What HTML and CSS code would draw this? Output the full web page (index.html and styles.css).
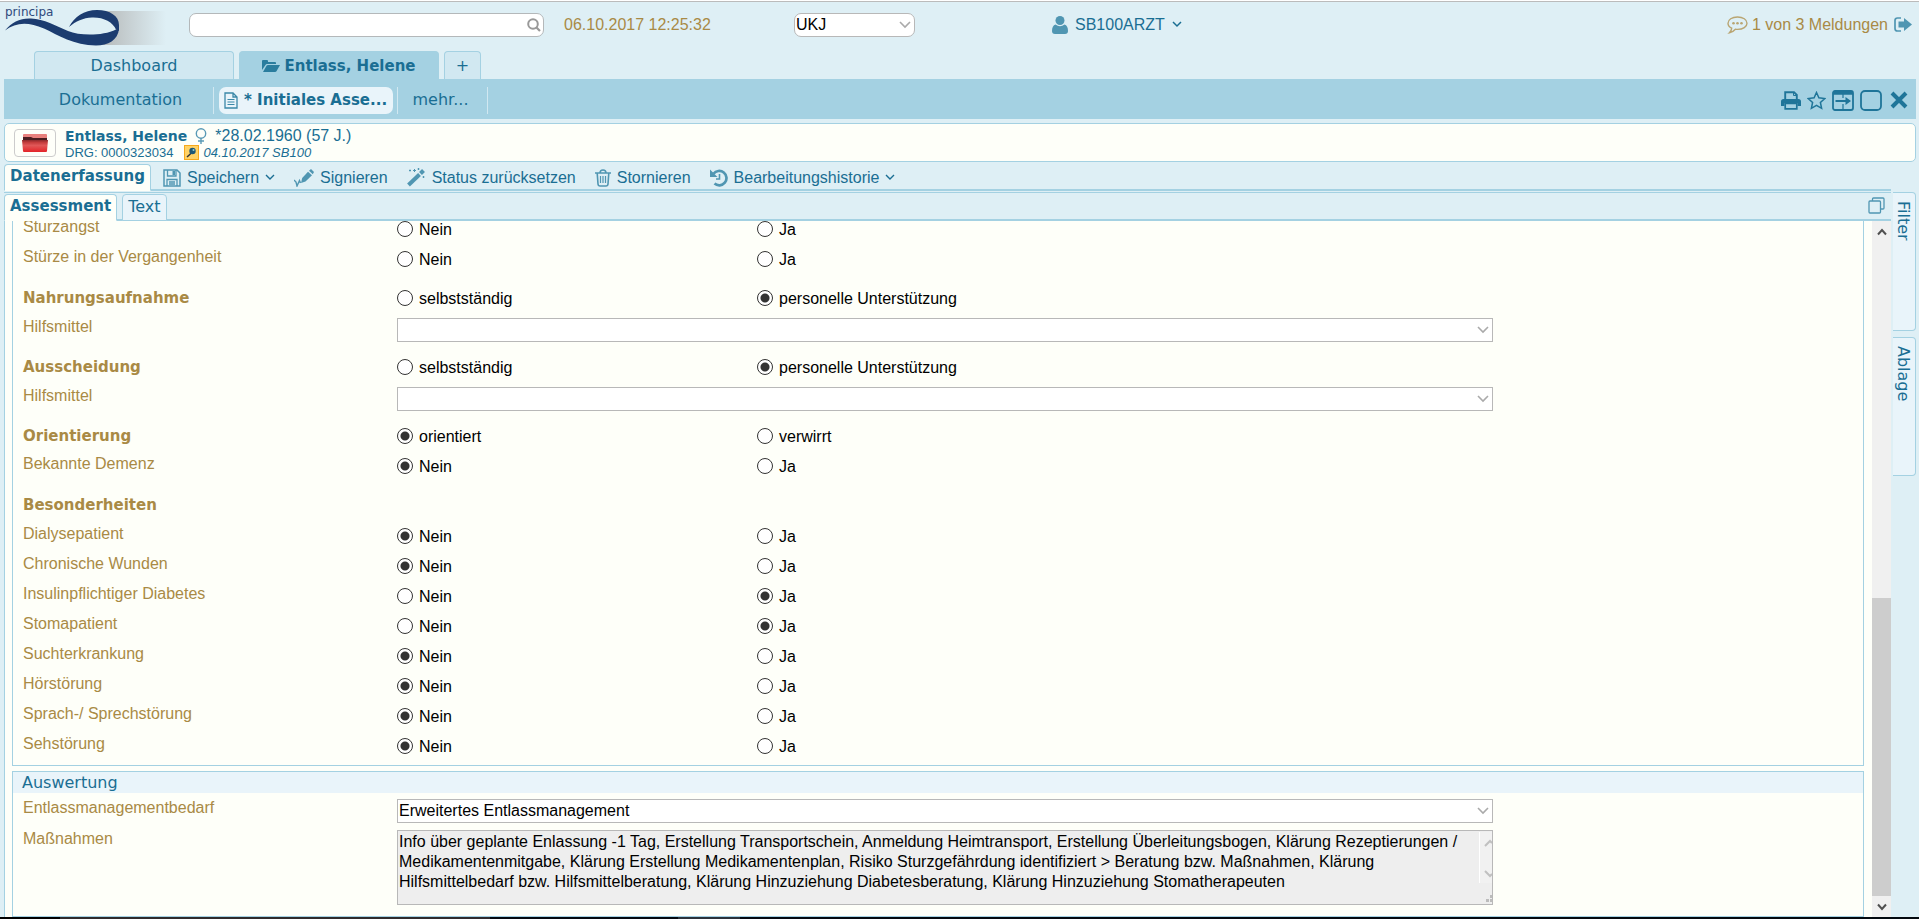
FILE: index.html
```
<!DOCTYPE html>
<html lang="de">
<head>
<meta charset="utf-8">
<title>Entlass, Helene – Initiales Assessment</title>
<link rel="stylesheet" href="styles.css">
</head>
<body>
<div class="app">
  <header class="topbar">
    <svg class="logo" width="166" height="46" viewBox="0 0 166 46" role="img" aria-label="principa">
      <defs><linearGradient id="fade" x1="0" x2="1"><stop offset="0" stop-color="#b5b8b8"/><stop offset="1" stop-color="#b5b8b8" stop-opacity="0"/></linearGradient></defs>
      <rect x="100" y="9" width="66" height="34" fill="url(#fade)"/>
      <ellipse cx="98" cy="26" rx="18" ry="15" fill="#deeff5"/>
      <path d="M5 28.500C12 20 20 16 31 16.500C44 17 56 24 68 29C80 34 103 34 116 27.500L119 27C118 38 108 43.500 96 43.500C74 43.500 58 33 44 26.500C28 19.500 16 20 5 28.500Z" fill="#1c3c70"/>
      <path d="M69 25C74 15 84 8 97 8C110 8 119 14 119 23V29L116 27.500C113 20 103 15 92 15.500C83 16 76 19 69 25Z" fill="#1c3c70"/>
      <text x="5" y="14" class="logo-text">principa</text>
    </svg>
    <div class="search">
      <input type="text" aria-label="Suche">
      <svg width="14" height="14" viewBox="0 0 14 14"><circle cx="6" cy="6" r="4.8" fill="none" stroke="#999" stroke-width="2"/><path d="M9.5 9.5L13 13" stroke="#999" stroke-width="2.2"/></svg>
    </div>
    <span class="clock">06.10.2017 12:25:32</span>
    <span class="select-wrap clinic">
      <select aria-label="Klinik"><option>UKJ</option></select>
      <svg width="12" height="8" viewBox="0 0 12 8"><path d="M1 1l5 5 5-5" fill="none" stroke="#aaa" stroke-width="1.600"/></svg>
    </span>
    <button class="plain user">
      <svg width="16" height="18" viewBox="0 0 16 18"><circle cx="8" cy="4.5" r="4.5" fill="#5096b2"/><path d="M3.500 8.500Q8 12 12.500 8.500Q16 9.500 16 15Q16 18 13 18H3Q0 18 0 15Q0 9.500 3.500 8.500Z" fill="#5096b2"/></svg>
      SB100ARZT
      <svg class="caret" width="10" height="7" viewBox="0 0 10 7"><path d="M1 1l4 4 4-4" fill="none" stroke="#1a6e93" stroke-width="1.500"/></svg>
    </button>
    <div class="messages">
      <svg width="21" height="18" viewBox="0 0 21 18"><path d="M10.500 1C16 1 20 3.700 20 7.200S16 13.400 10.500 13.400Q9.500 13.400 8.400 13.200Q6 16 2.500 16.700Q4.500 14.800 4.700 12.100Q1 10.300 1 7.200C1 3.700 5 1 10.500 1Z" fill="none" stroke="#b9a572" stroke-width="1.400"/><circle cx="6.500" cy="7.300" r="1.300" fill="#b9a572"/><circle cx="10.500" cy="7.300" r="1.300" fill="#b9a572"/><circle cx="14.500" cy="7.300" r="1.300" fill="#b9a572"/></svg>
      <span>1 von 3 Meldungen</span>
      <button class="plain" aria-label="Abmelden"><svg width="18" height="15" viewBox="0 0 18 15"><path d="M7 1H3.500Q1 1 1 3.500V11.500Q1 14 3.500 14H7" fill="none" stroke="#5096b2" stroke-width="1.700"/><path d="M4.500 4.500H10V1L18 7.500L10 14V10.500H4.500Z" fill="#5096b2"/></svg></button>
    </div>
  </header>

  <nav class="tabs">
    <button class="tab tab-wide">Dashboard</button>
    <button class="tab tab-wide tab-on">
      <svg width="18" height="14" viewBox="0 0 18 14"><path d="M0 11V2Q0 1 1 1H5Q6 1 6 2V3H13Q14 3 14 4V5H5Q4 5 3.300 6.200Z" fill="#2a7d9e"/><path d="M1 13L4.500 6.800Q5 6 6 6H18L14.500 12.200Q14 13 13 13Z" fill="#2a7d9e"/></svg>
      Entlass, Helene
    </button>
    <button class="tab tab-add">+</button>
  </nav>

  <div class="subbar">
    <button class="plain sub sub-doc">Dokumentation</button>
    <button class="plain sub-on">
      <svg width="14" height="17" viewBox="0 0 14 17"><path d="M1 1H9L13 5V16H1Z M9 1V5H13" fill="none" stroke="#3b88a8" stroke-width="1.300"/><path d="M3.500 7.500H10.500M3.500 10H10.500M3.500 12.500H10.500" stroke="#3b88a8" stroke-width="1.200"/></svg>
      * Initiales Asse...
    </button>
    <button class="plain sub sub-more">mehr...</button>
    <div class="tools">
      <button class="plain" aria-label="Drucken"><svg width="20" height="19" viewBox="0 0 20 19"><path d="M4.200 8V1.200H13L15.800 4V8" fill="none" stroke="#1f7599" stroke-width="1.900"/><path d="M12.500 1V4.500H16" fill="none" stroke="#1f7599"/><path d="M0 15V10.500Q0 8 2.500 8H17.500Q20 8 20 10.500V15H16.500V12H3.500V15Z" fill="#1f7599"/><path d="M4.200 12.500H15.800V17.800H4.200Z" fill="none" stroke="#1f7599" stroke-width="1.700"/></svg></button>
      <button class="plain" aria-label="Favorit"><svg width="19" height="19" viewBox="0 0 19 19"><path d="M9.500 1.500L11.900 6.800L17.800 7.500L13.400 11.500L14.600 17.300L9.500 14.400L4.400 17.300L5.600 11.500L1.200 7.500L7.100 6.800Z" fill="none" stroke="#1f7599" stroke-width="1.500"/></svg></button>
      <button class="plain" aria-label="Anordnen"><svg width="22" height="21" viewBox="0 0 22 21"><rect x="1" y="1" width="20" height="19" rx="2" fill="none" stroke="#1f7599" stroke-width="1.800"/><path d="M1 3H21" stroke="#1f7599" stroke-width="3.500"/><path d="M11 4V8M11 14V20" stroke="#1f7599" stroke-width="1.200"/><path d="M3.500 11H15" stroke="#1f7599" stroke-width="2"/><path d="M13.500 7L19 11L13.500 15Z" fill="#1f7599"/></svg></button>
      <button class="plain" aria-label="Maximieren"><svg width="22" height="21" viewBox="0 0 22 21"><rect x="1" y="1" width="20" height="19" rx="4" fill="none" stroke="#1f7599" stroke-width="1.800"/></svg></button>
      <button class="plain close" aria-label="Schließen"><svg width="18" height="18" viewBox="0 0 18 18"><path d="M2 2L16 16M16 2L2 16" stroke="#1f7599" stroke-width="4"/></svg></button>
    </div>
  </div>

  <section class="patient">
    <button class="folder" aria-label="Akte">
      <svg width="26" height="18" viewBox="0 0 26 18"><defs><linearGradient id="red" x1="0" x2="0" y1="0" y2="1"><stop offset="0" stop-color="#8a2a2c"/><stop offset=".2" stop-color="#c43c3c"/><stop offset=".45" stop-color="#e05858"/><stop offset="1" stop-color="#e32428"/></linearGradient></defs><path d="M1 1Q1 0 2 0H24Q25 0 25 1V6H1Z" fill="#e9817d"/><path d="M1 3H9L11 4H25V7H1Z" fill="#4a1d1f"/><path d="M0 6H26L25 17Q25 18 24 18H2Q1 18 1 17Z" fill="url(#red)"/></svg>
    </button>
    <div class="who">
      <div class="who-main"><strong>Entlass, Helene</strong>
        <svg width="12" height="16" viewBox="0 0 12 16"><circle cx="6" cy="5.500" r="4.700" fill="none" stroke="#5a9ab5" stroke-width="1.400"/><path d="M6 10V16M3 13H9" stroke="#5a9ab5" stroke-width="1.400"/></svg>
        <span class="born">*28.02.1960 (57 J.)</span></div>
      <div class="who-sub"><span>DRG: 0000323034</span>
        <svg width="15" height="15" viewBox="0 0 15 15"><rect x=".5" y=".5" width="14" height="14" fill="#ffd265" stroke="#f7a81b"/><path d="M3 12L8 7.500" stroke="#333" stroke-width="1.500"/><circle cx="8.500" cy="6" r="3.200" fill="#1d5776"/><circle cx="9.500" cy="5" r="1" fill="#9cc"/></svg>
        <em>04.10.2017 SB100</em></div>
    </div>
  </section>

  <div class="work">
    <main class="main">
      <div class="toolbar">
        <button class="tab-local tab-local-on tab-data">Datenerfassung</button>
        <div class="actions">
          <button class="plain"><svg width="18" height="18" viewBox="0 0 18 18"><path d="M1 1H14L17 4V17H1Z" fill="none" stroke="#5096b2" stroke-width="1.500"/><path d="M4.500 1V7H13V1M4 17V10.500H14V17M6 13H12M6 15H12" fill="none" stroke="#5096b2" stroke-width="1.300"/><path d="M9.500 2H12V6H9.500Z" fill="#5096b2"/></svg>Speichern<svg class="caret" width="10" height="7" viewBox="0 0 10 7"><path d="M1 1l4 4 4-4" fill="none" stroke="#1a6e93" stroke-width="1.400"/></svg></button>
          <button class="plain"><svg width="20" height="18" viewBox="0 0 20 18"><path d="M7 14L8.200 9L14 2.800L18 6.300L11.500 12.500Z" fill="#5096b2"/><path d="M15 1.800L17 0L20 3L18.800 5.200Z" fill="#5096b2"/><path d="M0 11L2 13L3 17L5.500 11.500L6.500 14" fill="none" stroke="#5096b2" stroke-width="1.400"/></svg>Signieren</button>
          <button class="plain"><svg width="19" height="19" viewBox="0 0 19 19"><path d="M1.500 17L12.500 6.500" stroke="#5096b2" stroke-width="4"/><path d="M13.500 5.500L16.500 2.500" stroke="#5096b2" stroke-width="4"/><path d="M3 1.500V3.500M2 2.500H4M7.500 1V4M6 2.500H9M11.500 0V2M10.500 1H12.500M16.500 8V10M15.500 9H17.500" stroke="#5096b2"/></svg>Status zurücksetzen</button>
          <button class="plain"><svg width="16" height="18" viewBox="0 0 16 18"><path d="M0 4H16M5 4Q5 1 8 1T11 4M2.200 4L3 15Q3.200 17 5 17H11Q12.800 17 13 15L13.800 4" fill="none" stroke="#5096b2" stroke-width="1.600"/><path d="M5.500 7V14M8 7V14M10.500 7V14" stroke="#5096b2" stroke-width="1.200"/></svg>Stornieren</button>
          <button class="plain"><svg width="18" height="18" viewBox="0 0 18 18"><path d="M3.500 4.800A7.200 7.200 0 1 1 4.500 14.500" fill="none" stroke="#5096b2" stroke-width="2.700"/><path d="M0 0.500V8H7.500Z" fill="#5096b2"/><path d="M9.500 5V10H6" fill="none" stroke="#5096b2" stroke-width="1.600"/></svg>Bearbeitungshistorie<svg class="caret" width="10" height="7" viewBox="0 0 10 7"><path d="M1 1l4 4 4-4" fill="none" stroke="#1a6e93" stroke-width="1.400"/></svg></button>
        </div>
      </div>
      <div class="viewbar">
        <button class="tab-local tab-local-on">Assessment</button>
        <button class="tab-local">Text</button>
        <button class="plain popout" aria-label="In neuem Fenster"><svg width="17" height="17" viewBox="0 0 17 17"><rect x="4.500" y="1" width="11.500" height="11" rx="1" fill="none" stroke="#5096b2" stroke-width="1.300"/><rect x="1" y="4" width="11.500" height="12" rx="1" fill="#deeff5" stroke="#5096b2" stroke-width="1.300"/></svg></button>
      </div>
      <div class="pane">
        <form class="form" id="form">
          <div class="box box-top" id="rows"></div>
          <div class="box">
            <h2>Auswertung</h2>
            <div class="result">
              <div class="row"><label for="bedarf">Entlassmanagementbedarf</label>
                <span class="select-wrap wide"><select id="bedarf"><option>Erweitertes Entlassmanagement</option></select><svg width="12" height="8" viewBox="0 0 12 8"><path d="M1 1l5 5 5-5" fill="none" stroke="#aaa" stroke-width="1.600"/></svg></span></div>
              <div class="row row-area"><label for="massnahmen">Maßnahmen</label>
                <span class="area wide"><textarea id="massnahmen" readonly>Info über geplante Enlassung -1 Tag, Erstellung Transportschein, Anmeldung Heimtransport, Erstellung Überleitungsbogen, Klärung Rezeptierungen / Medikamentenmitgabe, Klärung Erstellung Medikamentenplan, Risiko Sturzgefährdung identifiziert &gt; Beratung bzw. Maßnahmen, Klärung Hilfsmittelbedarf bzw. Hilfsmittelberatung, Klärung Hinzuziehung Diabetesberatung, Klärung Hinzuziehung Stomatherapeuten</textarea>
                <svg class="area-scroll" width="13" height="73" viewBox="0 0 13 73"><rect x="0" y="1" width="13" height="51" fill="#f1f1f1"/><path d="M.5 1V52" stroke="#fff"/><path d="M6 15l5-5 2 2M6 40l5 5 2-2" fill="none" stroke="#c0c0c0" stroke-width="2"/><path d="M7 68h3v3h-3zM11 68h2v3h-2zM11 64h2v3h-2z" fill="#bcbcbc"/></svg></span></div>
            </div>
          </div>
        </form>
        <div class="scroll">
          <button class="plain" aria-label="Nach oben"><svg width="10" height="8" viewBox="0 0 10 8"><path d="M1 6.500l4-4.500 4 4.500" fill="none" stroke="#505050" stroke-width="2"/></svg></button>
          <div class="track"><div class="thumb"></div></div>
          <button class="plain" aria-label="Nach unten"><svg width="10" height="8" viewBox="0 0 10 8"><path d="M1 1.500l4 4.500 4-4.500" fill="none" stroke="#505050" stroke-width="2"/></svg></button>
        </div>
      </div>
    </main>
    <aside class="side">
      <button>Filter</button>
      <button>Ablage</button>
    </aside>
  </div>
  <footer class="edge"></footer>
</div>
<script src="form.js"></script>
</body>
</html>
```
FILE: styles.css
```
* { box-sizing: border-box; }
body { margin: 0; background: #deeff5; color: #1a6e93; font: 16px/20px "Liberation Sans", Arial, sans-serif; }
button, input, select, textarea { font: inherit; color: inherit; margin: 0; }
svg { display: block; flex: none; }
.plain { display: flex; align-items: center; padding: 0; border: 0; background: none; white-space: nowrap; }

.app { display: flex; flex-direction: column; height: 100vh; border-top: 1px solid #fff; overflow: hidden; }

.topbar { display: flex; align-items: center; height: 46px; flex: none; border-top: 1px solid #bbb; padding-right: 7px; }
.logo { margin-right: 23px; }
.logo-text { font: 12px "DejaVu Sans", sans-serif; fill: #2f4a7c; }
.search { position: relative; width: 355px; }
.search input { display: block; width: 100%; height: 24px; border: 1px solid #b4b8ba; border-radius: 7px; background: #fff; padding: 0 24px 0 8px; }
.search svg { position: absolute; right: 3px; top: 5px; }
.clock { margin-left: 20px; width: 230px; color: #a98a45; }
.select-wrap { position: relative; display: block; color: #000; }
.select-wrap select { display: block; width: 100%; height: 24px; padding: 0 24px 0 1px; border: 1px solid #b8b8b8; border-radius: 0; background: #fff; appearance: none; }
.select-wrap svg { position: absolute; right: 4px; top: 8px; pointer-events: none; }
.clinic { width: 121px; }
.clinic select { border-radius: 7px; }
.user { margin-left: 137px; gap: 7px; }
.messages { margin-left: auto; display: flex; align-items: center; gap: 4px; color: #a98a45; }
.messages button { margin-left: 2px; }

.tabs { display: flex; gap: 5px; padding-left: 34px; height: 32px; flex: none; align-items: flex-end; }
.tab { display: flex; align-items: center; justify-content: center; gap: 4px; height: 28px; padding: 0; border: 1px solid #a4d1e2; border-bottom: 0; border-radius: 4px 4px 0 0; background: #d1e8f1; font-family: "DejaVu Sans", Verdana, sans-serif; }
.tab-wide { width: 200px; }
.tab-on { background: #a4d1e2; font-size: 15px; font-weight: bold; }
.tab-add { width: 37px; }

.subbar { display: flex; align-items: center; height: 40px; flex: none; margin: 0 3px 0 4px; padding: 2px 8px 0 0; background: #a4d1e2; font-family: "DejaVu Sans", Verdana, sans-serif; }
.sub { height: 27px; justify-content: center; border-right: 1px solid #d1e8f1; }
.sub-doc { width: 210px; padding-left: 24px; }
.sub-on { height: 27px; width: 174px; margin: 0 4px 0 5px; padding: 0 5px; gap: 6px; border-radius: 7px; background: #e9f4fa; font-size: 15px; font-weight: bold; }
.sub-more { width: 91px; padding-right: 4px; border-left: 1px solid #d1e8f1; }
.tools { display: flex; align-items: center; gap: 6px; margin-left: auto; }
.close { margin-left: 2px; }

.patient { display: flex; align-items: center; gap: 9px; height: 39px; flex: none; margin: 4px 3px 1px 4px; padding-left: 9px; border: 1px solid #a4d1e2; border-radius: 5px; background: #fefff9; }
.folder { display: grid; place-items: center; width: 42px; height: 28px; padding: 0; border: 1px solid #ccc; border-radius: 4px; background: #fefff9; }
.who { padding-top: 2px; }
.who-main { display: flex; align-items: center; height: 18px; gap: 8px; }
.who-main strong { font: bold 14px "DejaVu Sans", Verdana, sans-serif; }
.who-sub { display: flex; align-items: center; height: 15px; font-size: 13px; line-height: 15px; }
.who-sub svg { margin: 0 4px 0 11px; }

.work { display: flex; flex: 1; min-height: 0; }
.main { display: flex; flex-direction: column; flex: 1; min-width: 0; margin-left: 4px; }
.toolbar, .viewbar { display: flex; align-items: flex-end; height: 28px; flex: none; border-bottom: 2px solid #a4d1e2; }
.viewbar { margin-top: 1px; height: 29px; gap: 5px; border-top: 1px solid #a4d1e2; }
.tab-local { height: 27px; margin-bottom: -2px; padding: 0 5px 3px; border: 1px solid #a4d1e2; border-radius: 4px 4px 0 0; background: #e9f4fa; font: 16px "DejaVu Sans", Verdana, sans-serif; }
.tab-local-on { border-bottom-color: #fefff9; background: #fefff9; font-size: 15px; font-weight: bold; }
.tab-data { width: 147px; }
.actions { display: flex; align-items: center; align-self: stretch; gap: 19px; margin-left: 12px; padding-top: 3px; }
.actions .plain { gap: 6px; }
.popout { margin: 0 6px 5px auto; }

.pane { display: flex; flex: 1; min-height: 0; border-left: 1px solid #a4d1e2; background: #fefff9; }
.form { display: flex; flex-direction: column; justify-content: flex-end; gap: 5px; flex: 1; min-width: 0; margin: 0 8px 0 7px; overflow: hidden; }
.box { flex: none; border: 1px solid #a4d1e2; }
.box-top { border-top: 0; padding: 0 0 4px 10px; }
.box h2 { margin: 0; height: 21px; padding-left: 9px; background: #e9f4fa; font: 16px/21px "DejaVu Sans", Verdana, sans-serif; }
.group + .group { margin-top: 9px; }
.row { display: grid; grid-template-columns: 374fr 360fr 736fr 370fr; height: 30px; align-items: start; }
.row-head { height: 31px; }
.row > label, .row > .name { color: #a98a45; line-height: 28px; }
.row > .name { line-height: 26px; }
.row > .bold { font: bold 15px/30px "DejaVu Sans", Verdana, sans-serif; }
.wide { grid-column: 2 / 4; margin-top: 5px; }
.row > .option { display: flex; align-items: center; gap: 6px; height: 30px; color: #000; }
.option span { padding-top: 2px; }
.option input { appearance: none; width: 16px; height: 16px; border: 1px solid #333; border-radius: 50%; background: #fff; }
.option input:checked { background: radial-gradient(circle, #333 4px, #fff 5px); }

.result { padding: 1px 0 0 10px; }
.row-area { height: 92px; padding-top: 1px; }
.area { position: relative; display: block; color: #000; }
.area textarea { display: block; width: 100%; height: 75px; padding: 1px 14px 0 1px; border: 1px solid #b8b8b8; background: #eee; line-height: 20px; resize: none; overflow: hidden; }
.area-scroll { position: absolute; right: 1px; top: 1px; }

.scroll { display: flex; flex-direction: column; width: 19px; flex: none; background: #f0f0f0; }
.scroll button { height: 21px; justify-content: center; }
.track { display: flex; align-items: flex-end; flex: 1; }
.thumb { width: 100%; height: 45.6%; background: #cdcdcd; }

.side { display: flex; flex-direction: column; gap: 6px; width: 28px; padding: 29px 3px 0 2px; flex: none; }
.side button { display: flex; align-items: center; width: 23px; height: 139px; padding: 8px 2px 8px 0; border: 1px solid #a4d1e2; border-left: 0; border-radius: 0 4px 4px 0; background: #e9f4fa; font: 16px "DejaVu Sans", Verdana, sans-serif; writing-mode: vertical-rl; }
.edge { height: 2px; flex: none; background: linear-gradient(90deg, #000 60px, #2f2b2c 60px 490px, #03090f 490px 678px, #2a3238 678px 740px, #03090f 740px); }
```
FILE: form.js
```
// Each entry: label, then either two options with the index of the chosen one, "select", or a bare heading.
const groups = [
  [
    { label: "Sturzangst", options: ["Nein", "Ja"], chosen: -1 },
    { label: "Stürze in der Vergangenheit", options: ["Nein", "Ja"], chosen: -1 }
  ],
  [
    { label: "Nahrungsaufnahme", bold: true, options: ["selbstständig", "personelle Unterstützung"], chosen: 1 },
    { label: "Hilfsmittel", select: true }
  ],
  [
    { label: "Ausscheidung", bold: true, options: ["selbstständig", "personelle Unterstützung"], chosen: 1 },
    { label: "Hilfsmittel", select: true }
  ],
  [
    { label: "Orientierung", bold: true, options: ["orientiert", "verwirrt"], chosen: 0 },
    { label: "Bekannte Demenz", options: ["Nein", "Ja"], chosen: 0 }
  ],
  [
    { label: "Besonderheiten", bold: true, head: true },
    { label: "Dialysepatient", options: ["Nein", "Ja"], chosen: 0 },
    { label: "Chronische Wunden", options: ["Nein", "Ja"], chosen: 0 },
    { label: "Insulinpflichtiger Diabetes", options: ["Nein", "Ja"], chosen: 1 },
    { label: "Stomapatient", options: ["Nein", "Ja"], chosen: 1 },
    { label: "Suchterkrankung", options: ["Nein", "Ja"], chosen: 0 },
    { label: "Hörstörung", options: ["Nein", "Ja"], chosen: 0 },
    { label: "Sprach-/ Sprechstörung", options: ["Nein", "Ja"], chosen: 0 },
    { label: "Sehstörung", options: ["Nein", "Ja"], chosen: 0 }
  ]
];

let n = 0;
document.getElementById("rows").innerHTML = groups.map(rows =>
  '<div class="group">' + rows.map(r => {
    const id = "f" + (++n);
    if (r.select) {
      return `<div class="row"><label for="${id}">${r.label}</label><span class="select-wrap wide"><select id="${id}"><option></option></select><svg width="12" height="8" viewBox="0 0 12 8"><path d="M1 1l5 5 5-5" fill="none" stroke="#aaa" stroke-width="1.600"/></svg></span></div>`;
    }
    const opts = (r.options || []).map((o, i) =>
      `<label class="option"><input type="radio" name="${id}"${i === r.chosen ? " checked" : ""}><span>${o}</span></label>`).join("");
    return `<div class="row${r.head ? " row-head" : ""}" role="radiogroup" aria-labelledby="${id}"><span id="${id}" class="name${r.bold ? " bold" : ""}">${r.label}</span>${opts}</div>`;
  }).join("") + "</div>").join("");
```
